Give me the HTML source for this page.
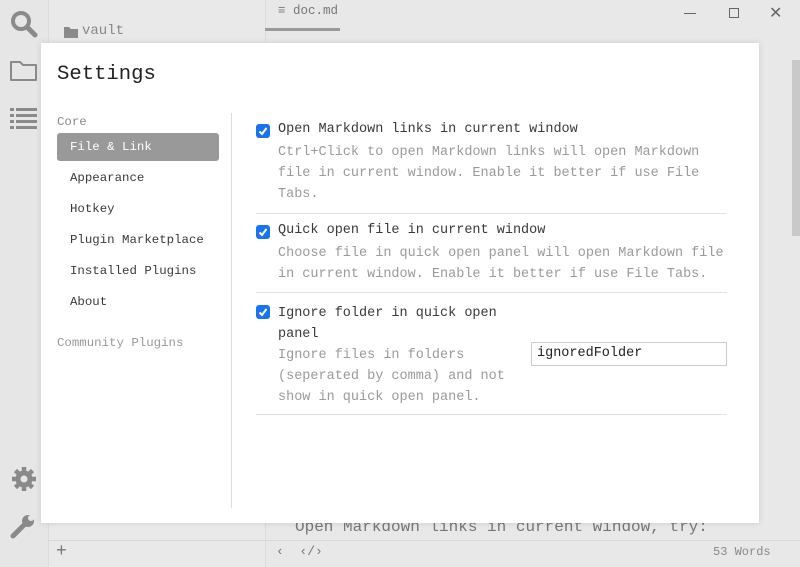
<!DOCTYPE html>
<html><head><meta charset="utf-8"><style>
*{margin:0;padding:0;box-sizing:border-box}
body{width:800px;height:567px;overflow:hidden;background:#e8e8e8;font-family:"Liberation Mono",monospace;position:relative}
.a{position:absolute;white-space:nowrap}
.m{font-size:13.5px;color:#3a3a3a}
.d{font-size:13.5px;color:#9a9a9a}
.s{font-size:12.4px;color:#3a3a3a}
.cb{position:absolute;width:14px;height:14px;background:#1a73e8;border-radius:3px}
.cb svg{position:absolute;left:1px;top:1px}
.hr{position:absolute;left:256px;width:471px;height:1px;background:#e2e2e2}
</style></head><body>
<div class="a" style="left:0;top:0;width:48px;height:567px;background:#e6e6e6"></div>
<div class="a" style="left:48px;top:0;width:217px;height:567px;background:#e9e9e9;border-left:1px solid #dcdcdc"></div>
<div class="a" style="left:265px;top:0;width:535px;height:567px;background:#e8e8e8;border-left:1px solid #dcdcdc"></div>
<div class="a" style="left:265px;top:28px;width:75px;height:3px;background:#9a9a9a"></div>
<div class="a" style="left:792px;top:60px;width:8px;height:176px;background:#c9c9c9"></div>
<div class="a" style="left:48px;top:540px;width:752px;height:1px;background:#d8d8d8"></div>
<svg class="a" style="left:8px;top:8px" width="32" height="32"><circle cx="13" cy="13" r="8" fill="none" stroke="#8a8a8a" stroke-width="4"/><path d="M19 19l8 8" stroke="#8a8a8a" stroke-width="5" stroke-linecap="round"/></svg>
<svg class="a" style="left:9px;top:58px" width="30" height="26"><path d="M2 4h9l3 3h13v15H2z" fill="none" stroke="#8a8a8a" stroke-width="2" stroke-linejoin="round"/></svg>
<svg class="a" style="left:9px;top:107px" width="30" height="24"><g fill="#8a8a8a"><rect x="1" y="1" width="4" height="3"/><rect x="7" y="1" width="21" height="3"/><rect x="1" y="7" width="4" height="3"/><rect x="7" y="7" width="21" height="3"/><rect x="1" y="13" width="4" height="3"/><rect x="7" y="13" width="21" height="3"/><rect x="1" y="19" width="4" height="3"/><rect x="7" y="19" width="21" height="3"/></g></svg>
<svg class="a" style="left:11px;top:466px" width="26" height="26" viewBox="0 0 26 26"><g fill="#8a8a8a"><circle cx="13" cy="13" r="8.5"/><g stroke="#8a8a8a" stroke-width="4.5"><path d="M13 1v24M1 13h24M4.5 4.5l17 17M21.5 4.5l-17 17"/></g></g><circle cx="13" cy="13" r="3.5" fill="#e6e6e6"/></svg>
<svg class="a" style="left:9px;top:512px" width="28" height="28"><path d="M4 24L16 12" stroke="#8a8a8a" stroke-width="5" stroke-linecap="round"/><circle cx="19" cy="9" r="6" fill="#8a8a8a"/><circle cx="22" cy="6" r="3" fill="#e6e6e6"/></svg>
<svg class="a" style="left:64px;top:26px" width="14" height="12"><path d="M0 1h5l2 2h7v9H0z" fill="#8a8a8a"/></svg>
<div class="a" style="left:82px;top:23px;font-size:14px;color:#888">vault</div>
<div class="a" style="left:278px;top:4px;font-size:12.5px;color:#777">≡ doc.md</div>
<div class="a" style="left:684px;top:13px;width:12px;height:1px;background:#666"></div>
<div class="a" style="left:729px;top:8px;width:10px;height:10px;border:1px solid #666"></div>
<div class="a" style="left:769px;top:3px;font-size:16px;color:#666;font-family:'DejaVu Sans'">✕</div>
<div class="a" style="left:295px;top:518px;font-size:16px;color:#777">Open Markdown links in current window, try:</div>
<div class="a" style="left:56px;top:542px;font-size:18px;color:#777">+</div>
<div class="a" style="left:276px;top:544px;font-size:13px;color:#777">‹ &nbsp;‹/›</div>
<div class="a" style="left:713px;top:545px;font-size:12px;color:#888">53 Words</div>
<div class="a" style="left:41px;top:43px;width:718px;height:480px;background:#fff;box-shadow:0 0 6px rgba(0,0,0,.12)"></div>
<div class="a" style="left:57px;top:63px;font-size:20.6px;color:#222">Settings</div>
<div class="a" style="left:231px;top:113px;width:1px;height:395px;background:#ddd"></div>
<div class="a s" style="left:57px;top:115px;color:#888">Core</div>
<div class="a" style="left:57px;top:133px;width:162px;height:28px;background:#999;border-radius:3px"></div>
<div class="a s" style="left:70px;top:140px;color:#fff">File &amp; Link</div>
<div class="a s" style="left:70px;top:171px">Appearance</div>
<div class="a s" style="left:70px;top:202px">Hotkey</div>
<div class="a s" style="left:70px;top:233px">Plugin Marketplace</div>
<div class="a s" style="left:70px;top:264px">Installed Plugins</div>
<div class="a s" style="left:70px;top:295px">About</div>
<div class="a s" style="left:57px;top:336px;color:#999">Community Plugins</div>

<div class="cb" style="left:256px;top:124px"><svg width="12" height="12"><path d="M2.5 6.5l2.5 2.5 4.5-6" fill="none" stroke="#fff" stroke-width="2"/></svg></div>
<div class="a m" style="left:278px;top:122px">Open Markdown links in current window</div>
<div class="a d" style="left:278px;top:142px;line-height:21px">Ctrl+Click to open Markdown links will open Markdown<br>file in current window. Enable it better if use File<br>Tabs.</div>
<div class="hr" style="top:213px"></div>
<div class="cb" style="left:256px;top:225px"><svg width="12" height="12"><path d="M2.5 6.5l2.5 2.5 4.5-6" fill="none" stroke="#fff" stroke-width="2"/></svg></div>
<div class="a m" style="left:278px;top:223px">Quick open file in current window</div>
<div class="a d" style="left:278px;top:243px;line-height:21px">Choose file in quick open panel will open Markdown file<br>in current window. Enable it better if use File Tabs.</div>
<div class="hr" style="top:292px"></div>
<div class="cb" style="left:256px;top:305px"><svg width="12" height="12"><path d="M2.5 6.5l2.5 2.5 4.5-6" fill="none" stroke="#fff" stroke-width="2"/></svg></div>
<div class="a m" style="left:278px;top:303px;line-height:21px">Ignore folder in quick open<br>panel</div>
<div class="a d" style="left:278px;top:345px;line-height:21px">Ignore files in folders<br>(seperated by comma) and not<br>show in quick open panel.</div>
<div class="a" style="left:531px;top:342px;width:196px;height:24px;border:1px solid #ccc"></div>
<div class="a m" style="left:537px;top:346px;color:#222">ignoredFolder</div>
<div class="hr" style="top:414px"></div>
</body></html>
